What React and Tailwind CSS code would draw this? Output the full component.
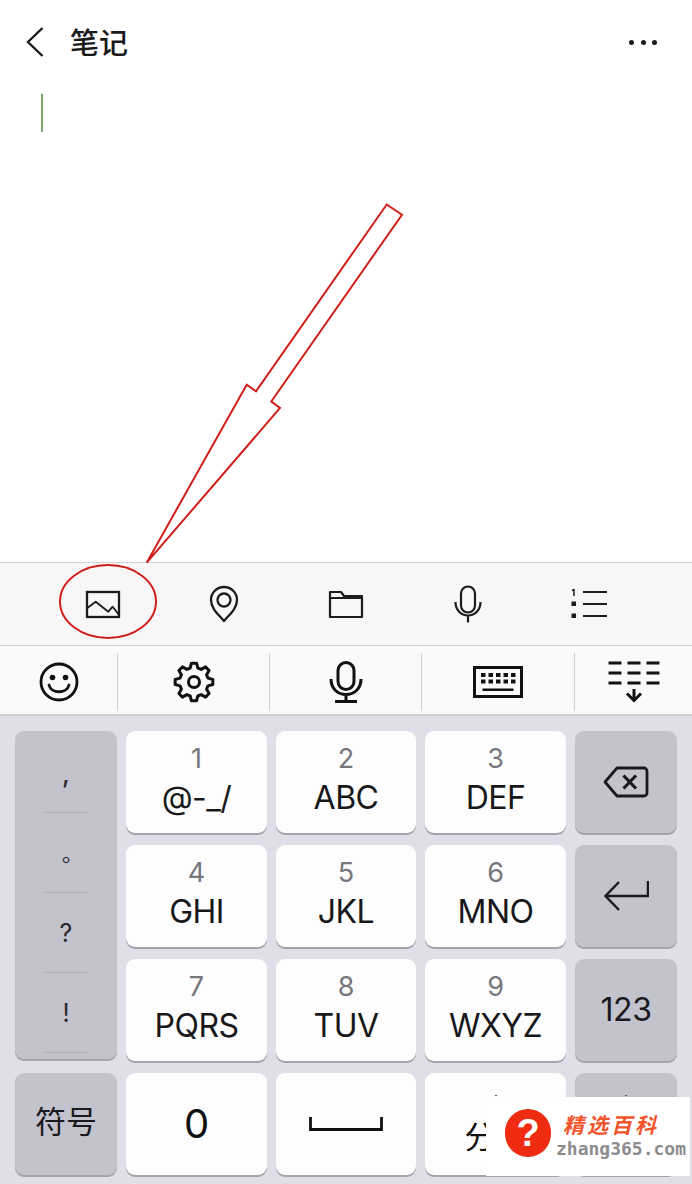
import React from 'react';

const cjk = { fontFamily: '"Noto Sans CJK SC", sans-serif' };

// 8 tooth gear outline around (21,21)
const gearPath = () => {
  const pts = [];
  for (let i = 0; i < 8; i++) {
    const a = (i * Math.PI) / 4 - Math.PI / 2;
    const step = Math.PI / 4;
    const at = (r, t) => `${(21 + r * Math.cos(t)).toFixed(2)} ${(21 + r * Math.sin(t)).toFixed(2)}`;
    pts.push(at(19, a - step * 0.17), at(19, a + step * 0.17), at(14.5, a + step * 0.34), at(14.5, a + step * 0.66));
  }
  return `M${pts.join(' L')} Z`;
};

const ImageIcon = () => (
  <svg width="36" height="30" viewBox="0 0 36 30" fill="none" stroke="#1c1c1c" strokeWidth="2.3">
    <rect x="2" y="3" width="32" height="25" />
    <path d="M2 19.3 L10.7 12.7 L23.3 22.7 L27.7 17.7 L34 26" strokeWidth="1.8" strokeLinejoin="round" />
  </svg>
);

const PinIcon = () => (
  <svg width="30" height="38" viewBox="0 0 30 38" fill="none" stroke="#1c1c1c" strokeWidth="2.3">
    <path d="M15 36 C10 30 2 24 2 15 A13 13 0 0 1 28 15 C28 24 20 30 15 36 Z" strokeLinejoin="round" />
    <circle cx="15" cy="15" r="6.5" />
  </svg>
);

const FolderIcon = () => (
  <svg width="36" height="30" viewBox="0 0 36 30" fill="none" stroke="#1c1c1c" strokeWidth="2.2">
    <path d="M2 28 V3 H13 L16 7 H34 V28 Z M2 9 H34" strokeLinejoin="round" />
  </svg>
);

const ThinMicIcon = () => (
  <svg width="28" height="38" viewBox="0 0 28 38" fill="none" stroke="#1c1c1c" strokeWidth="2.2">
    <rect x="7" y="1.5" width="14" height="26" rx="7" />
    <path d="M1.5 17 C1.5 25 7 30.5 14 30.5 C21 30.5 26.5 25 26.5 17 M14 30.5 V37.5" />
  </svg>
);

const ListIcon = () => (
  <svg width="38" height="30" viewBox="0 0 38 30" fill="none" stroke="#1c1c1c" strokeWidth="2.2">
    <path d="M13 3 H37 M13 15 H37 M13 27 H37" />
    <path d="M2 1.5 L4 0.5 V7" strokeWidth="1.5" />
    <rect x="1.5" y="12.5" width="4.5" height="4.5" fill="#1c1c1c" stroke="none" />
    <rect x="1.5" y="24.5" width="4.5" height="4.5" fill="#1c1c1c" stroke="none" />
  </svg>
);

const SmileIcon = () => (
  <svg width="40" height="40" viewBox="0 0 40 40" fill="none" stroke="#111" strokeWidth="2.8">
    <circle cx="20" cy="20" r="18" />
    <circle cx="13.5" cy="15.5" r="2.8" fill="#111" stroke="none" />
    <circle cx="26.5" cy="15.5" r="2.8" fill="#111" stroke="none" />
    <path d="M10 23 C12 32 28 32 30 23" strokeLinecap="round" />
  </svg>
);

const GearIcon = () => (
  <svg width="42" height="42" viewBox="0 0 42 42" fill="none" stroke="#111" strokeWidth="3" strokeLinejoin="round">
    <path d={gearPath()} />
    <circle cx="21" cy="21" r="5.5" />
  </svg>
);

const BoldMicIcon = () => (
  <svg width="34" height="42" viewBox="0 0 34 42" fill="none" stroke="#111" strokeWidth="3">
    <rect x="9" y="1.5" width="16" height="27" rx="8" />
    <path d="M2 18 C2 28 9 33.5 17 33.5 C25 33.5 32 28 32 18 M17 33.5 V40 M6 40.5 H28" />
  </svg>
);

const KeyboardIcon = () => (
  <svg width="50" height="32" viewBox="0 0 50 32" fill="none">
    <rect x="1.5" y="1.5" width="47" height="29" stroke="#111" strokeWidth="3" />
    <path
      d="M8 7h4.5v4H8z M15.5 7h4.5v4h-4.5z M23 7h4.5v4H23z M30.5 7h4.5v4h-4.5z M38 7h4.5v4H38z M8 13.5h4.5v4H8z M15.5 13.5h4.5v4h-4.5z M23 13.5h4.5v4H23z M30.5 13.5h4.5v4h-4.5z M38 13.5h4.5v4H38z M9.5 22.5h31v2.6h-31z"
      fill="#111"
    />
  </svg>
);

const CollapseIcon = () => (
  <svg width="52" height="42" viewBox="0 0 52 42" fill="none" stroke="#111" strokeWidth="3">
    <path d="M0.5 2 H13.5 M19.5 2 H32.5 M38.5 2 H51.5 M0.5 12 H13.5 M19.5 12 H32.5 M38.5 12 H51.5 M0.5 22 H13.5 M19.5 22 H32.5 M38.5 22 H51.5" />
    <path d="M26 28 V40" />
    <path d="M19 32.5 L26 39.5 L33 32.5" />
  </svg>
);

const BackspaceIcon = () => (
  <svg width="46" height="32" viewBox="0 0 46 32" fill="none" stroke="#1a1a1e" strokeWidth="2.8" strokeLinejoin="round">
    <path d="M14 2 H41 A3 3 0 0 1 44 5 V27 A3 3 0 0 1 41 30 H14 L2 16 Z" />
    <path d="M20.5 9.5 L33 22.5 M33 9.5 L20.5 22.5" strokeWidth="3.2" />
  </svg>
);

const EnterIcon = () => (
  <svg width="46" height="32" viewBox="0 0 46 32" fill="none" stroke="#1a1a1e" strokeWidth="2.5">
    <path d="M45 1 V16 H3" />
    <path d="M16 2 L2.5 16 L16 30" />
  </svg>
);

const SpaceIcon = () => (
  <svg width="74" height="14" viewBox="0 0 74 14" fill="none" stroke="#111" strokeWidth="2.8">
    <path d="M1.5 0 V12.5 H72.5 V0" />
  </svg>
);

const Key = ({ top, label }) => (
  <div className="flex flex-col items-center rounded-[9px] bg-[#fdfdfe] pt-[11px] shadow-[0_2px_0_#a4a4aa]">
    <span className="text-[27px] leading-[34px] text-[#77777c]">{top}</span>
    <span className="mt-[2px] text-[32px] leading-[40px] tracking-[-0.5px] text-[#18181a]">{label}</span>
  </div>
);

const GrayKey = ({ children }) => (
  <div className="flex items-center justify-center rounded-[9px] bg-[#c3c3cd] shadow-[0_2px_0_#a4a4aa]">{children}</div>
);

const WideKey = ({ children }) => (
  <div className="flex items-center justify-center rounded-[9px] bg-[#fdfdfe] shadow-[0_2px_0_#a4a4aa]">{children}</div>
);

const rows = [
  ['1', '@-_/'],
  ['2', 'ABC'],
  ['3', 'DEF'],
  ['4', 'GHI'],
  ['5', 'JKL'],
  ['6', 'MNO'],
  ['7', 'PQRS'],
  ['8', 'TUV'],
  ['9', 'WXYZ'],
];

const App = () => {
  return (
    <div className="relative flex h-[1184px] w-[692px] flex-col overflow-hidden bg-white" style={{ fontFamily: 'Inter, "Noto Sans CJK SC", sans-serif' }}>
      {/* Header */}
      <div className="flex h-[84px] shrink-0 items-center justify-between pl-[26px] pr-[35px]">
        <div className="flex items-center">
          <svg width="18" height="30" viewBox="0 0 18 30" fill="none" stroke="#1a1a1a" strokeWidth="2.4">
            <path d="M16.5 1 L2 15 L16.5 29" />
          </svg>
          <span className="mb-[2px] ml-[26px] text-[29px] font-medium leading-none text-[#1a1a1a]" style={cjk}>
            笔记
          </span>
        </div>
        <div className="flex gap-[6.5px]">
          <div className="h-[5px] w-[5px] rounded-full bg-[#1a1a1a]" />
          <div className="h-[5px] w-[5px] rounded-full bg-[#1a1a1a]" />
          <div className="h-[5px] w-[5px] rounded-full bg-[#1a1a1a]" />
        </div>
      </div>

      {/* Note body */}
      <div className="flex-1 pl-[41px] pt-[10px]">
        <div className="h-[38px] w-[2px] bg-[#7bab69]" />
      </div>

      {/* Note toolbar */}
      <div className="grid h-[84px] shrink-0 grid-cols-5 border-y border-y-[#d4d4d4] bg-[#f7f7f7] px-[42px]">
        <div className="flex items-center justify-center"><ImageIcon /></div>
        <div className="flex items-center justify-center"><PinIcon /></div>
        <div className="flex items-center justify-center"><FolderIcon /></div>
        <div className="flex items-center justify-center"><ThinMicIcon /></div>
        <div className="flex items-center justify-center"><ListIcon /></div>
      </div>

      {/* Keyboard top bar */}
      <div className="flex h-[70px] shrink-0 items-end border-b-2 border-b-[#d0d0d4] bg-[#fafafa] pb-[3px]">
        <div className="flex h-[58px] w-[118px] items-center justify-center border-r border-r-[#cfcfcf]"><SmileIcon /></div>
        <div className="flex h-[58px] w-[152px] items-center justify-center border-r border-r-[#cfcfcf]"><GearIcon /></div>
        <div className="flex h-[58px] w-[152px] items-center justify-center border-r border-r-[#cfcfcf]"><BoldMicIcon /></div>
        <div className="flex h-[58px] w-[153px] items-center justify-center border-r border-r-[#cfcfcf]"><KeyboardIcon /></div>
        <div className="flex h-[58px] flex-1 items-center justify-center"><CollapseIcon /></div>
      </div>

      {/* Keys */}
      <div className="grid h-[468px] shrink-0 grid-cols-[102px_141px_140px_141px_102px] grid-rows-[102px_102px_102px_102px] gap-x-[9px] gap-y-[12px] bg-[#dfdfe9] px-[15px] pt-[15px]">
        <div className="row-span-3 mb-[2px] flex flex-col items-center rounded-[9px] bg-[#c3c3cd] shadow-[0_2px_0_#a4a4aa]">
          <div className="flex h-[82px] w-[42px] items-start justify-center border-b border-b-[#aaaab2] pt-[30px] text-[26px] font-medium leading-[26px] text-[#2a2a2e]">,</div>
          <div className="flex h-[80px] w-[42px] items-start justify-center border-b border-b-[#aaaab2] pt-[32px] text-[22px] leading-[26px] text-[#2a2a2e]" style={{ fontFamily: '"Noto Sans CJK TC", sans-serif' }}>。</div>
          <div className="flex h-[80px] w-[42px] items-start justify-center border-b border-b-[#aaaab2] pt-[27px] text-[25px] leading-[26px] text-[#2a2a2e]">?</div>
          <div className="flex h-[80px] w-[42px] items-start justify-center border-b border-b-[#aaaab2] pt-[27px] text-[25px] leading-[26px] text-[#2a2a2e]">!</div>
        </div>

        <Key top={rows[0][0]} label={rows[0][1]} />
        <Key top={rows[1][0]} label={rows[1][1]} />
        <Key top={rows[2][0]} label={rows[2][1]} />
        <GrayKey><BackspaceIcon /></GrayKey>

        <Key top={rows[3][0]} label={rows[3][1]} />
        <Key top={rows[4][0]} label={rows[4][1]} />
        <Key top={rows[5][0]} label={rows[5][1]} />
        <GrayKey><EnterIcon /></GrayKey>

        <Key top={rows[6][0]} label={rows[6][1]} />
        <Key top={rows[7][0]} label={rows[7][1]} />
        <Key top={rows[8][0]} label={rows[8][1]} />
        <GrayKey><span className="text-[32px] tracking-[-0.5px] text-[#1a1a1e]">123</span></GrayKey>

        <GrayKey><span className="mb-[8px] text-[31px] text-[#1a1a1e]" style={cjk}>符号</span></GrayKey>
        <WideKey><span className="text-[40px] leading-none text-[#111]">0</span></WideKey>
        <WideKey><SpaceIcon /></WideKey>
        <div className="flex flex-col items-center rounded-[9px] bg-[#fdfdfe] pt-[22px] shadow-[0_2px_0_#a4a4aa]">
          <div className="h-px w-[2px] bg-[#555]" />
          <span className="mt-[18px] whitespace-nowrap text-[31px] leading-[42px] text-[#111]" style={cjk}>分词</span>
        </div>
        <div className="flex flex-col items-center rounded-[9px] bg-[#c3c3cd] pt-[22px] shadow-[0_2px_0_#a4a4aa]">
          <div className="h-px w-[2px] bg-[#555]" />
        </div>
      </div>

      {/* Red annotation drawn over the screenshot */}
      <svg className="pointer-events-none absolute left-0 top-0" width="692" height="1184" viewBox="0 0 692 1184" fill="none" stroke="#cf1f1c" strokeWidth="2">
        <polygon points="386.7,204.5 402,214.7 271.3,401.5 280,408 146.7,562.7 246.7,384.7 256,391.3" />
        <ellipse cx="108" cy="601.5" rx="48" ry="36.5" />
      </svg>

      {/* Watermark */}
      <div className="absolute left-[486px] top-[1097px] flex h-[79px] w-[204px] items-start bg-white pl-[19px] pt-[12px]">
        <div className="flex h-[48px] w-[46px] shrink-0 items-center justify-center rounded-full bg-[#ef2c12] text-[38px] font-bold leading-none text-white" style={{ fontFamily: '"Liberation Sans", sans-serif' }}>
          ?
        </div>
        <div className="ml-[5px] flex flex-col pt-[3px]">
          <span className="pl-[7px] text-[21px] font-bold italic leading-[24px] tracking-[3px] text-[#f2552c]" style={cjk}>精选百科</span>
          <span className="mt-[2px] text-[18px] font-bold leading-[22px] text-[#8c8c8c]" style={{ fontFamily: '"DejaVu Sans Mono", monospace' }}>zhang365.com</span>
        </div>
      </div>
    </div>
  );
};

export default App;
